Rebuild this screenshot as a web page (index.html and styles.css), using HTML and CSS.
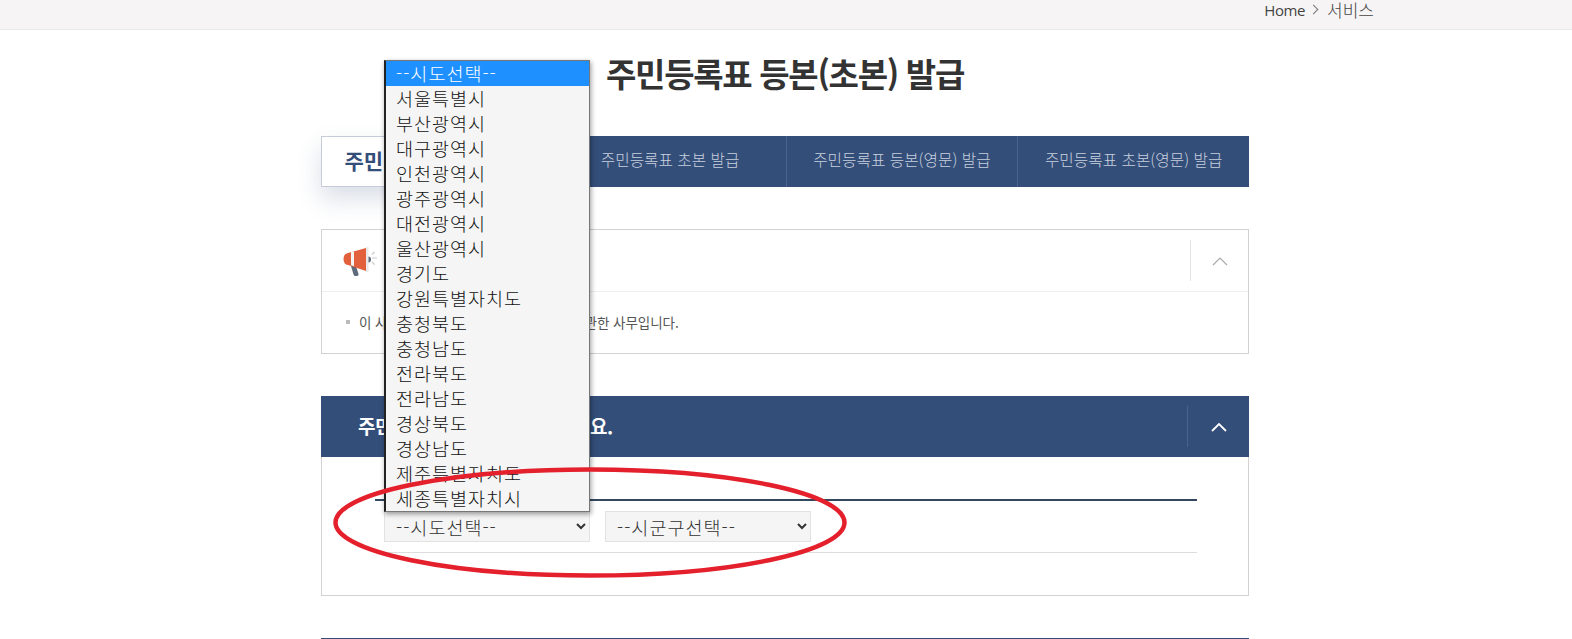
FILE: index.html
```html
<!DOCTYPE html>
<html lang="ko">
<head>
<meta charset="UTF-8" />
<title>주민등록표 등본(초본) 발급</title>
<link rel="stylesheet" href="styles.css">
</head>
<body>

<div class="topbar">
  <div class="crumbs"><span class="crumb-home">Home</span><span class="crumb-sep"></span><span class="crumb-page">서비스</span></div>
</div>

<div class="wrap">
  <h1>주민등록표 등본(초본) 발급</h1>

  <div class="tabs">
    <a class="tab active">주민등록표 등본 발급</a>
    <a class="tab">주민등록표 초본 발급</a>
    <a class="tab">주민등록표 등본(영문) 발급</a>
    <a class="tab">주민등록표 초본(영문) 발급</a>
  </div>

  <div class="panel">
    <div class="panel-head">
      <svg class="horn" width="36" height="32" viewBox="0 0 36 32">
        <path d="M9 21l5 0 2.500 8q.4 2-1.600 2l-1.400 0q-1.500 0-2-1.500z" fill="#5f6b7a"/>
        <path d="M6 8l18-5 0 23-18-6q-4.500-.5-4.500-6t4.500-6z" fill="#e2603c"/>
        <path d="M9 7.200l3-.9 0 15-3-1z" fill="#f4f4f4"/>
        <path d="M24 2l2.500 0 0 25-2.500 0z" fill="#e9e9e9"/>
        <path d="M26.500 11.500q2.500 0 2.500 3t-2.500 3z" fill="#5f6b7a"/>
        <path d="M30 9.700l2.500-2.700M30 13h5M30 17l2.700 2.700" stroke="#c9c9c9" stroke-width="1.200" fill="none"/>
      </svg>
      <span class="panel-title">안내</span>
      <div class="toggle">
        <svg width="16" height="10" viewBox="0 0 16 10"><path d="M1 9l7-7 7 7" fill="none" stroke="#aaa" stroke-width="1.200"/></svg>
      </div>
    </div>
    <div class="panel-body">
      <p class="note">이 사무는 주민등록표 등본(초본) 발급에 관한 사무입니다.</p>
    </div>
  </div>

  <div class="panel panel-blue">
    <div class="panel-head">
      <span class="panel-title">주민등록 거주지를 선택해주세요.</span>
      <div class="toggle">
        <svg width="16" height="10" viewBox="0 0 16 10"><path d="M1 9l7-7 7 7" fill="none" stroke="#fff" stroke-width="1.800"/></svg>
      </div>
    </div>
    <div class="panel-body">
      <div class="addr-row">
        <select class="addr-select"><option>--시도선택--</option></select>
        <select class="addr-select"><option>--시군구선택--</option></select>
      </div>
    </div>
  </div>

  <div class="next-bar"></div>
</div>

<!-- open list of the first select -->
<ul class="dropdown">
  <li class="picked">--시도선택--</li>
  <li>서울특별시</li>
  <li>부산광역시</li>
  <li>대구광역시</li>
  <li>인천광역시</li>
  <li>광주광역시</li>
  <li>대전광역시</li>
  <li>울산광역시</li>
  <li>경기도</li>
  <li>강원특별자치도</li>
  <li>충청북도</li>
  <li>충청남도</li>
  <li>전라북도</li>
  <li>전라남도</li>
  <li>경상북도</li>
  <li>경상남도</li>
  <li>제주특별자치도</li>
  <li>세종특별자치시</li>
</ul>

<!-- hand drawn circle -->
<svg class="scribble" width="520" height="116" viewBox="0 0 520 116">
  <ellipse cx="259" cy="57.500" rx="254.500" ry="53" fill="none" stroke="#e4202c" stroke-width="4.500"/>
</svg>

</body>
</html>
```

FILE: styles.css
```css
html, body {
  margin: 0;
  padding: 0;
}
body {
  font-family: "Noto Sans CJK KR", "Noto Sans", sans-serif;
  background: white;
  color: #333;
  height: 639px;
  overflow: hidden;
  position: relative;
}
.topbar {
  height: 29px;
  background: #f6f4f4;
  border-bottom: 1px solid #e8e8e8;
}
.crumbs {
  width: 1374px;
  display: flex;
  justify-content: flex-end;
  align-items: center;
  height: 19px;
  color: #444;
  font-weight: 300;
}
.crumb-home {
  font-family: "Open Sans", sans-serif;
  font-size: 15px;
  font-weight: 400;
  letter-spacing: -0.4px;
}
.crumb-page {
  font-size: 17px;
}
.crumb-sep {
  display: inline-block;
  width: 6px;
  height: 6px;
  margin: 0 10px 0 5px;
  border-top: 1px solid #777;
  border-right: 1px solid #777;
  transform: rotate(45deg);
}
.wrap {
  width: 928px;
  margin-left: 321px;
}
h1 {
  margin: 0 0 21px;
  padding-top: 19px;
  height: 85px;
  box-sizing: border-box;
  text-align: center;
  font-size: 33px;
  line-height: 48px;
  font-weight: 700;
  letter-spacing: -1.300px;
  color: #333;
}
.tabs {
  display: flex;
  height: 51px;
  background: #344e7a;
  margin-bottom: 42px;
}
.tab {
  flex: 1;
  box-sizing: border-box;
  display: flex;
  align-items: center;
  justify-content: center;
  padding-bottom: 4px;
  font-size: 15.700px;
  font-weight: 300;
  color: #c9d0de;
  border-left: 1px solid #4a6290;
}
.tab.active {
  background: white;
  color: #344e7a;
  font-size: 21px;
  font-weight: 700;
  border: 1px solid #c5cbd8;
  box-shadow: 0 12px 24px rgba(52,78,122,0.18);
}
.panel {
  border: 1px solid #d2d2d2;
  margin-bottom: 42px;
}
.panel-head {
  display: flex;
  align-items: center;
  height: 61px;
  border-bottom: 1px solid #eee;
  padding-left: 20px;
}
.horn {
  margin-right: 12px;
}
.panel-title {
  flex: 1;
  font-size: 18px;
  font-weight: 700;
}
.toggle {
  width: 57px;
  height: 41px;
  border-left: 1px solid #e4e4e4;
  display: flex;
  align-items: center;
  justify-content: center;
}
.panel-body {
  padding: 20px 24px;
  height: 61px;
  box-sizing: border-box;
}
.note {
  margin: 0;
  font-size: 13.500px;
  line-height: 20px;
  letter-spacing: -0.050px;
  color: #555;
  padding-left: 13px;
  position: relative;
}
.note::before {
  content: "";
  position: absolute;
  left: 0;
  top: 8px;
  width: 4px;
  height: 4px;
  background: #bbb;
}
.panel-blue .panel-head {
  background: #344e7a;
  margin: -1px -1px 0;
  border-bottom: 0;
  padding-left: 37px;
}
.panel-blue .panel-title {
  color: white;
  font-size: 19px;
  letter-spacing: -0.400px;
  padding-bottom: 3px;
}
.panel-blue .toggle {
  width: 61px;
  border-left-color: #4a6290;
}
.panel-blue .panel-body {
  height: 138px;
  padding: 42px 51px 0 53px;
}
.addr-row {
  display: flex;
  gap: 15px;
  border-top: 2px solid #34475f;
  border-bottom: 1px solid #ddd;
  height: 54px;
  padding: 10px 0 0 9px;
  box-sizing: border-box;
}
.addr-select {
  width: 206px;
  height: 31px;
  padding-left: 7px;
  background-color: #f5f5f5;
  border: 1px solid #e2e2e2;
  border-radius: 0;
  font-family: inherit;
  font-size: 18.500px;
  font-weight: 300;
  letter-spacing: 1px;
  color: #333;
}
.next-bar {
  height: 2px;
  background: #344e7a;
}
.dropdown {
  position: absolute;
  left: 384px;
  top: 60px;
  width: 206px;
  height: 452px;
  box-sizing: border-box;
  margin: 0;
  padding: 0;
  list-style: none;
  background: #f5f5f5;
  border: 1px solid #777;
  border-left: 2px solid #222;
  box-shadow: 1px 2px 5px rgba(0,0,0,0.4);
  font-size: 18.500px;
  font-weight: 300;
  color: #111;
}
.dropdown li {
  height: 25px;
  line-height: 24px;
  padding-left: 10px;
  letter-spacing: 1px;
}
.dropdown li.picked {
  background: #1e90ff;
  color: white;
}
.scribble {
  position: absolute;
  left: 331px;
  top: 465px;
}
```
